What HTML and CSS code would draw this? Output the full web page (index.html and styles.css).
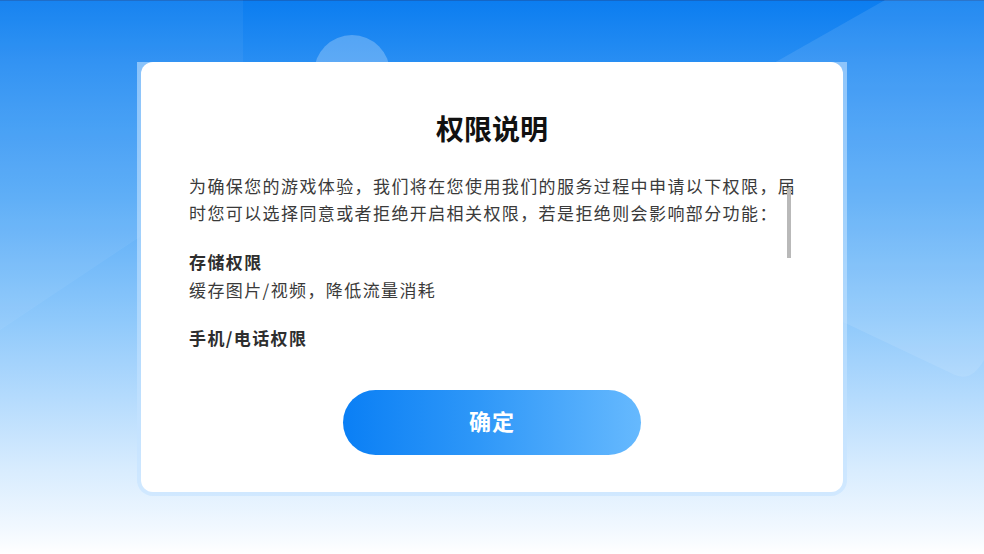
FILE: index.html
```html
<!DOCTYPE html>
<html lang="zh-CN">
<head>
<meta charset="utf-8">
<title>权限说明</title>
<link rel="stylesheet" href="styles.css">
</head>
<body>
<div class="bg" aria-hidden="true">
  <svg class="bg-art" width="984" height="554" viewBox="0 0 984 554">
    <polygon points="0,0 243,0 243,190 141,236 0,330" fill="#ffffff" fill-opacity="0.05"/>
    <circle cx="352" cy="73" r="38" fill="#ffffff" fill-opacity="0.25"/>
    <path d="M885 0 L984 0 L984 360 Q972 382 955 375 L843 322 L700 105 Z" fill="#ffffff" fill-opacity="0.1"/>
  </svg>
</div>
<main class="stage">
  <div class="frame">
    <section class="card">
      <h1 class="title">权限说明</h1>
      <div class="scroll">
        <div class="scroll-content">
          <p class="intro">为确保您的游戏体验，我们将在您使用我们的服务过程中申请以下权限，届时您可以选择同意或者拒绝开启相关权限，若是拒绝则会影响部分功能：</p>
          <div class="item">
            <h2 class="item-title">存储权限</h2>
            <p class="item-desc">缓存图片/视频，降低流量消耗</p>
          </div>
          <div class="item">
            <h2 class="item-title">手机/电话权限</h2>
          </div>
        </div>
        <div class="thumb"></div>
      </div>
      <button class="confirm" type="button">确定</button>
    </section>
  </div>
</main>
</body>
</html>
```
FILE: styles.css
```css
html, body {
  margin: 0;
  padding: 0;
}
body {
  width: 984px;
  height: 554px;
  overflow: hidden;
  position: relative;
  font-family: "Noto Sans CJK SC", "Noto Sans", sans-serif;
  background:
    linear-gradient(180deg, #1466c6 0, #1466c6 1px, rgba(0,0,0,0) 1px),
    linear-gradient(180deg, #0b7df0 0%, #2a8ff3 12%, #58abf7 36%, #8fc9fb 58%, #b5dbfd 72%, #d6ebfe 84%, #f3f9ff 96%, #ffffff 100%);
}
.bg {
  position: absolute;
  left: 0;
  top: 0;
  width: 984px;
  height: 554px;
  z-index: 0;
}
.bg-art {
  display: block;
}
.stage {
  position: relative;
  z-index: 1;
  display: flex;
  padding: 62px 0 0 137px;
}
.frame {
  padding: 0 4px 4px;
  border-radius: 0 0 16px 16px;
  background: rgba(196, 226, 255, 0.6);
}
.card {
  width: 702px;
  height: 430px;
  box-sizing: border-box;
  padding: 48px 48px 37px;
  background: #ffffff;
  border-radius: 12px;
  display: flex;
  flex-direction: column;
}
.title {
  margin: 0 0 26px;
  font-size: 28px;
  line-height: 36px;
  font-weight: 700;
  color: #111111;
  text-align: center;
}
.scroll {
  position: relative;
  height: 183px;
  margin-right: -8px;
  overflow: hidden;
}
.scroll-content {
  font-size: 17px;
  letter-spacing: 1.4px;
  color: #3a3a3a;
}
.intro {
  margin: 0 0 22px;
  line-height: 27px;
}
.item {
  margin-bottom: 20px;
}
.item-title {
  margin: 0;
  font-size: 17px;
  line-height: 28px;
  font-weight: 700;
  color: #2e2e2e;
}
.item-desc {
  margin: 0;
  line-height: 28px;
}
.thumb {
  position: absolute;
  left: 598px;
  top: 16px;
  width: 4px;
  height: 70px;
  background: #b9b9b9;
}
.confirm {
  margin: 35px auto 0;
  width: 298px;
  height: 65px;
  border: 0;
  border-radius: 33px;
  background: linear-gradient(90deg, #0a7ff5 0%, #2e97f8 45%, #66b9fe 100%);
  color: #ffffff;
  font-family: "Noto Sans CJK SC", "Noto Sans", sans-serif;
  font-size: 22px;
  font-weight: 700;
  letter-spacing: 1px;
  padding: 0 0 5px;
}
```
